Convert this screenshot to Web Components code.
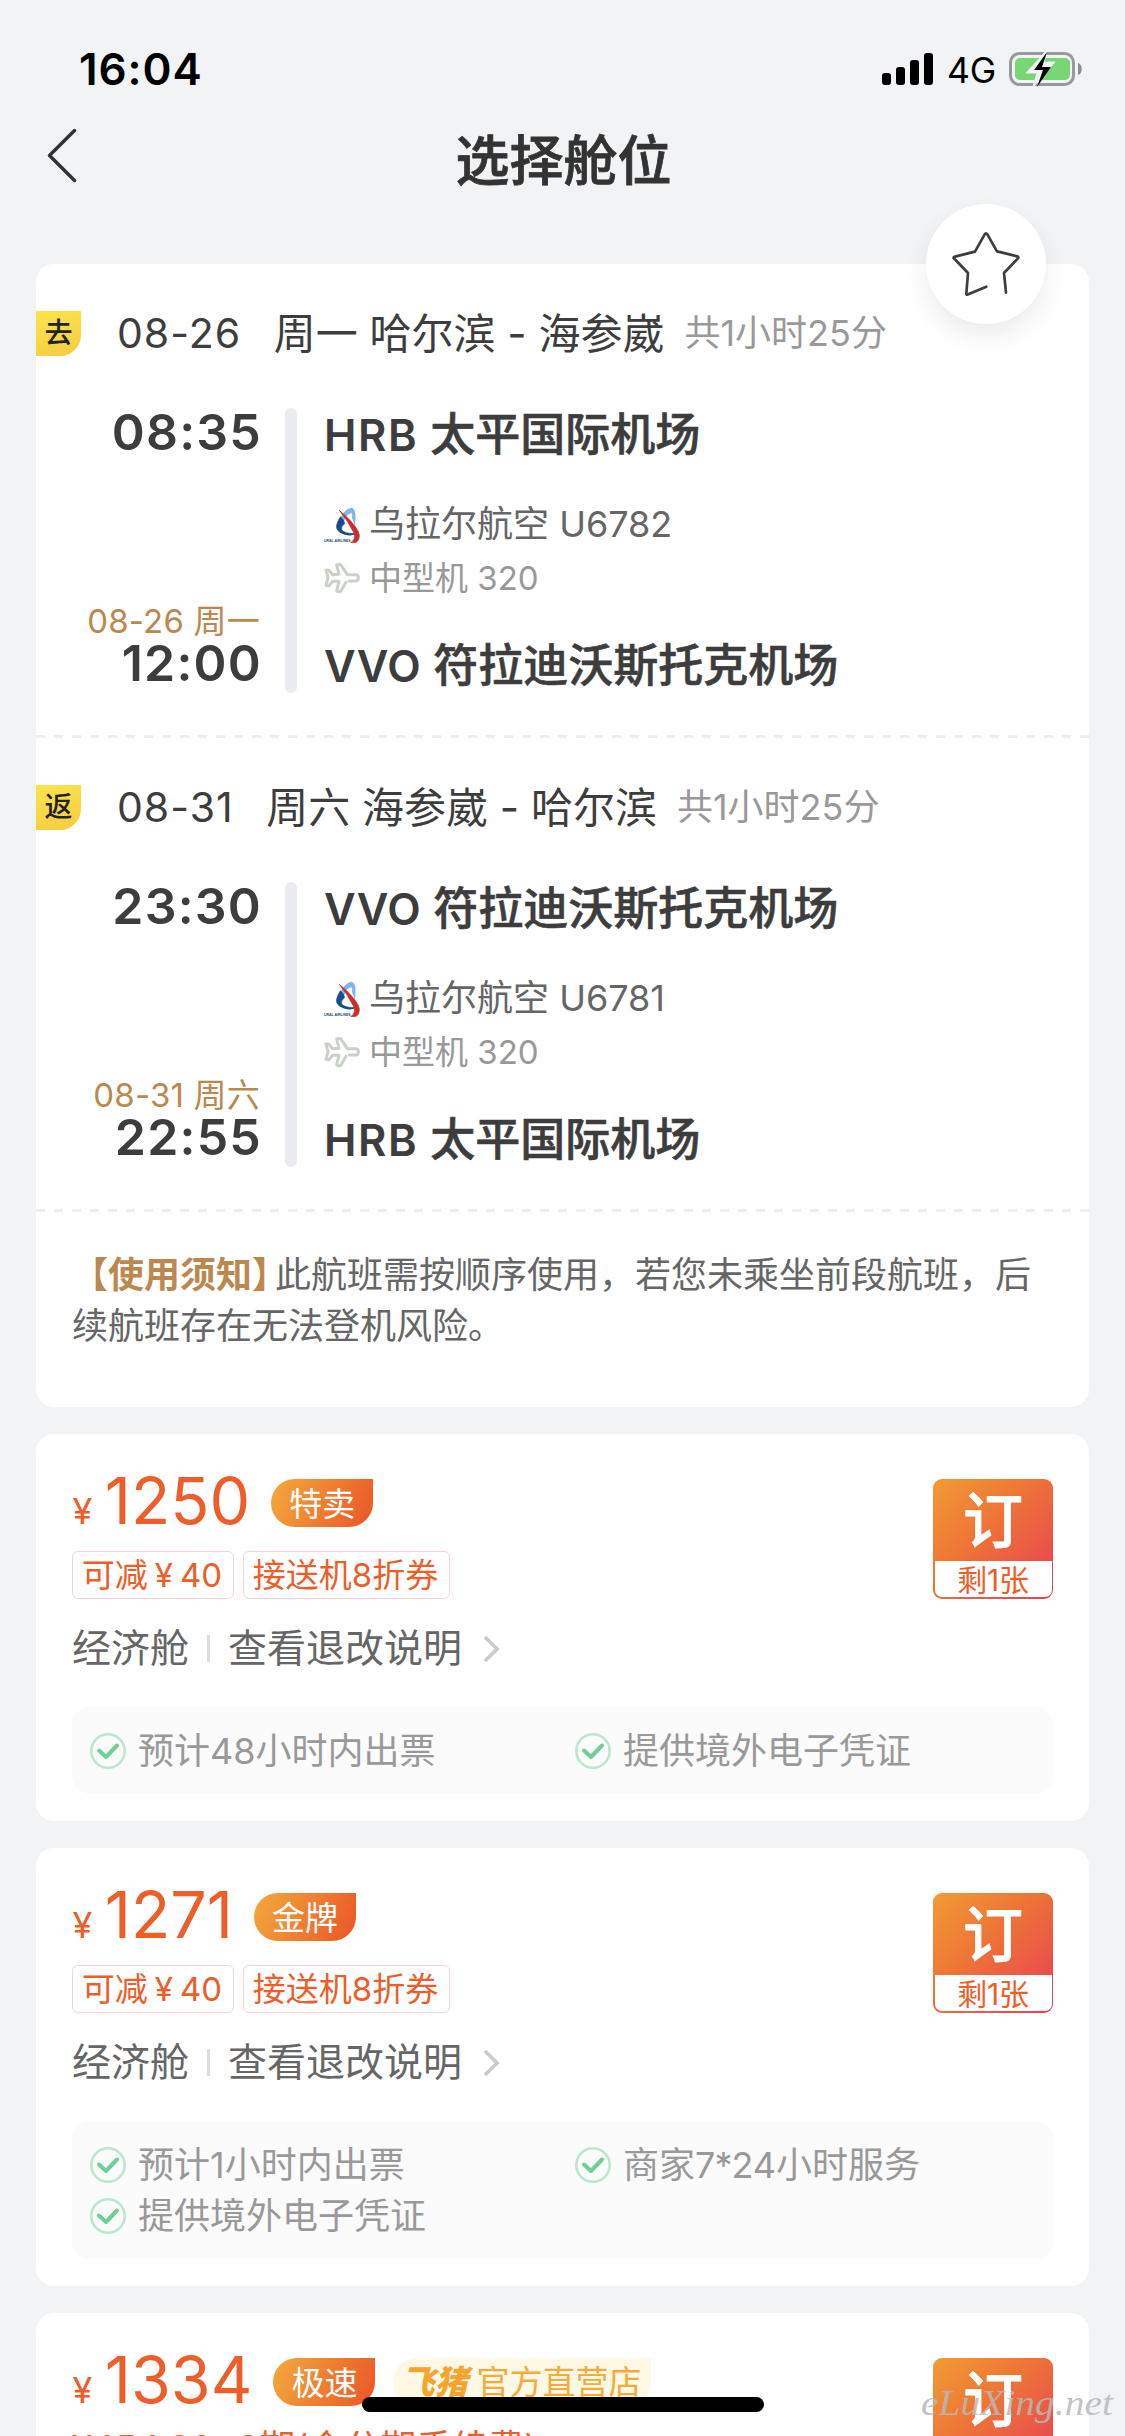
<!DOCTYPE html>
<html lang="zh-CN">
<head>
<meta charset="utf-8">
<title>选择舱位</title>
<style>
  html, body { margin: 0; padding: 0; }
  body {
    width: 1125px; height: 2436px; overflow: hidden;
    background: #f1f3f5; color: #3d3d3d;
    font-family: Inter, "Noto Sans CJK SC", sans-serif;
    -webkit-font-smoothing: antialiased;
  }
</style>
</head>
<body>
<cabin-page></cabin-page>

<script>
const define = (name, render) => customElements.define(name, class extends HTMLElement {
  constructor() { super(); this.attachShadow({ mode: 'open' }); }
  connectedCallback() { this.shadowRoot.innerHTML = render(k => this.getAttribute(k) || '', this); }
});

define('status-bar', () => `
<style>
  :host { display: flex; height: 108px; box-sizing: border-box; padding: 48px 42px 0 79px; align-items: flex-start; color: #000; }
  .time { font-size: 44px; font-weight: 600; line-height: 42px; letter-spacing: .9px; flex: 1; }
  .net { font-size: 35.5px; line-height: 45px; margin: 0 13px 0 13px; letter-spacing: -.2px; }
  svg { display: block; }
</style>
<div class="time">16:04</div>
<svg width="52" height="42" viewBox="0 0 52 42"><rect x="0" y="25" width="9" height="12" rx="3"/><rect x="14" y="19" width="9" height="18" rx="3"/><rect x="28" y="12" width="9" height="25" rx="3"/><rect x="42" y="5" width="9" height="32" rx="3"/></svg>
<div class="net">4G</div>
<svg width="74" height="42" viewBox="0 0 74 42">
  <rect x="1.5" y="5.5" width="63" height="31" rx="9" fill="none" stroke="#999" stroke-width="3"/>
  <path d="M69 15c5 1 5 11 0 12z" fill="#8e8e8e"/>
  <rect x="6" y="10" width="55" height="22" rx="5" fill="#78d675"/>
  <path d="M38 2 17 25h11l-4 14 22-25H35z" fill="#f1f3f5" stroke="#f1f3f5" stroke-width="1"/>
  <path d="M38 4 25 22h9L28 39 42 19h-9z" fill="#000"/>
</svg>`);

define('nav-bar', () => `
<style>
  :host { display: grid; grid-template-columns: 120px 1fr 120px; height: 156px; box-sizing: border-box; align-items: start; }
  svg { margin: 20px 0 0 46px; display: block; }
  h1 { margin: 24px 0 0 2px; font-size: 54px; line-height: 60px; font-weight: 500; text-align: center; color: #333; -webkit-text-stroke: .8px #333; }
</style>
<svg width="32" height="56" viewBox="0 0 32 56"><path d="M28.500 2.500 3.500 27.500 28.500 52.500" fill="none" stroke="#333" stroke-width="3.500" stroke-linecap="round" stroke-linejoin="round"/></svg>
<h1><slot></slot></h1><span></span>`);

define('favorite-button', () => `
<style>
  :host { display: block; width: 120px; height: 120px; border-radius: 50%; background: #fff; box-shadow: 0 12px 24px rgba(0,0,0,.08); }
</style>
<svg width="120" height="120" viewBox="197 521 360 360"><path d="M378 769 320 793Q318 794 318 790L323 728 280 683Q279 680 284 679L344 664 373 612Q377 606 381 612L410 663 471 678Q476 680 473 684L431 728 437 787" fill="none" stroke="#3d3d3d" stroke-width="8" stroke-linecap="round" stroke-linejoin="round"/></svg>`);

define('airline-logo', () => `
<style>:host{display:block;width:36px;height:36px} svg{display:block}</style>
<svg width="36" height="36" viewBox="0 0 108 108">
  <path d="M45 42Q60 6 83 2Q97 6 94 40L93 58Q89 43 84 33Q87 15 77 20Q66 23 58 48Q49 50 45 42Z" fill="#7fb5e8"/>
  <path d="M49 29Q60 38 62 49Q49 61 53 69Q61 80 95 80Q77 89 56 80Q34 71 38 54Q41 42 49 29Z" fill="#164b8e" stroke="#164b8e" stroke-width="2"/>
  <path d="M46 10Q75 34 91 55Q118 88 97 106L80 107Q98 95 88 75Q72 43 46 10Z" fill="#c7302c" stroke="#c7302c" stroke-width="2"/>
  <text x="0" y="104" font-family="Liberation Sans" font-size="13" font-weight="700" fill="#234a7d" textLength="80" lengthAdjust="spacingAndGlyphs">URAL AIRLINES</text>
</svg>`);

define('plane-icon', () => `
<style>:host{display:block;width:36px;height:32px} svg{display:block}</style>
<svg width="36" height="32" viewBox="0 0 108 96"><path d="M76 57H96Q103 56 103 47Q103 38 95 38H70L50 8Q46 6 38 9L45 37 26 38 15 25 6 24 12 47 6 70 15 71 26 58 45 58 38 87Q45 92 51 87L66 61" fill="none" stroke="#c9d2c6" stroke-width="9" stroke-linecap="round" stroke-linejoin="round"/></svg>`);

define('flight-segment', a => {
  const airport = s => { const [code, name] = s.split(' '); return `<div class="ap"><b class="${code}">${code}</b> ${name}</div>`; };
  return `
<style>
  :host { display: block; height: 474px; box-sizing: border-box; padding-top: 47px;
    background: repeating-linear-gradient(90deg, #eee 0 9px, transparent 9px 18px) left bottom / 100% 3px no-repeat; }
  .head { display: flex; height: 45px; align-items: center; font-size: 41px; line-height: 45px; white-space: pre; }
  .tag { width: 45px; height: 45px; border-radius: 0 0 21px 0; background: linear-gradient(160deg, #fae54a, #f6cb42); font-size: 28px; font-weight: 500; text-align: center; color: #222; margin-right: 36px; line-height: 45px; }
  .date { letter-spacing: 1px; margin-right: 32.5px; }
  .cjk { font-size: 42px; letter-spacing: 0; }
  .dur { font-size: 36px; color: #999; margin-left: 20px; line-height: 44px; height: 45px; }
  .body { display: flex; margin-top: 52px; height: 285px; }
  .times { width: 224px; display: flex; flex-direction: column; text-align: right; }
  .t { font-size: 50px; font-weight: 600; line-height: 48px; letter-spacing: 1.200px; margin-right: -2px; }
  .d2 { margin-top: auto; font-size: 33px; line-height: 36px; color: #bb8850; letter-spacing: .2px; }
  .t.end { margin-bottom: 6px; }
  .bar { width: 12px; border-radius: 6px; background: #ebecf1; margin: 0 27px 0 25px; }
  .ap { font-size: 45px; font-weight: 500; line-height: 53px; height: 51px; -webkit-text-stroke: .6px #3d3d3d; }
  .ap b { font-size: 43.5px; font-weight: 600; letter-spacing: .5px; -webkit-text-stroke: 0; }
  .ap .HRB { letter-spacing: 1.600px; }
  .row { display: flex; height: 36px; align-items: center; gap: 9px; }
  .row span { height: 36px; line-height: 35px; }
  .air { margin-top: 48px; font-size: 36px; color: #666; }
  .craft { margin: 17px 0 43px; font-size: 33px; color: #999; }
  .craft span { line-height: 36px; }
</style>
<div class="head"><div class="tag">${a('tag')}</div><span class="date">${a('date')}</span><span class="cjk">${a('week')} ${a('route')}</span><span class="dur">共1小时25分</span></div>
<div class="body">
  <div class="times"><div class="t">${a('dep')}</div><div class="d2">${a('date')} ${a('week')}</div><div class="t end">${a('arr')}</div></div>
  <div class="bar"></div>
  <div>
    ${airport(a('from'))}
    <div class="row air"><airline-logo></airline-logo><span>乌拉尔航空 ${a('no')}</span></div>
    <div class="row craft"><plane-icon></plane-icon><span>中型机 320</span></div>
    ${airport(a('to'))}
  </div>
</div>`; });

define('usage-notice', () => `
<style>
  :host { display: block; padding: 38px 36px 0; height: 157px; font-size: 36px; line-height: 51px; color: #666; }
  p { margin: 0; width: 984px; white-space: nowrap; }
  b { font-weight: 700; color: #bb8850; margin-right: -13px; }
</style>
<p><b>【使用须知】</b>此航班需按顺序使用，若您未乘坐前段航班，后<br>续航班存在无法登机风险。</p>`);

define('white-card', () => `
<style>:host{display:block;background:#fff;border-radius:18px;margin:0 36px 27px;position:relative}</style><slot></slot>`);

define('book-button', () => `
<style>
  :host { display: flex; flex-direction: column; width: 120px; height: 120px; box-sizing: border-box; border-radius: 9px; padding: 0 1.5px 2px; background: linear-gradient(135deg, #f29b35, #ee7636 40%, #e93f55 98%); }
  .go { height: 82px; line-height: 84px; text-align: center; color: #fff; font-size: 60px; font-weight: 500; -webkit-text-stroke: .8px #fff; }
  .left { height: 36px; background: #fff; border-radius: 0 0 7px 7px; text-align: center; color: #ed5e2a; font-size: 30px; line-height: 39px; letter-spacing: -.2px; }
</style><div class="go">订</div><div class="left">剩1张</div>`);

define('label-badge', () => `
<style>:host{display:block;height:48px;line-height:50px;box-sizing:border-box;padding:0 18px;border-radius:24px 0 24px 24px;color:#fff;font-size:33px;background:linear-gradient(115deg,#f2a43a 8%,#ec5b29 92%)}</style><slot></slot>`);

define('store-badge', () => `
<style>:host{display:flex;height:48px;line-height:49px;width:258px;box-sizing:border-box;padding-left:8px;border-radius:24px 0 24px 24px;color:#f3ac3c;font-size:33px;background:#fff8e4}
b{font-weight:900;font-style:italic;color:#f5a42e;margin-right:9px}</style><b>飞猪</b><slot></slot>`);

define('coupon-tag', () => `
<style>:host{display:block;height:48px;line-height:46.5px;box-sizing:border-box;padding:0 9px;border:1.500px solid #fad2d0;border-radius:6px;color:#ed5e2a;font-size:33px;text-indent:-2px;text-align:center}</style><slot></slot>`);

define('service-item', () => `
<style>:host{display:flex;height:51px;align-items:center;gap:12px;color:#999;font-size:36px;line-height:50px;white-space:nowrap;font-feature-settings:"calt" 0} svg{display:block} span{padding-top:1.500px}</style>
<svg width="36" height="36" viewBox="0 0 36 36" fill="none"><circle cx="18" cy="18" r="16.700" stroke="#bbe8cd" stroke-width="2.600"/><path d="M9 17.500 16 24 27 12.500" stroke="#70cf93" stroke-width="4" stroke-linecap="round" stroke-linejoin="round"/></svg><span><slot></slot></span>`);

define('fare-card', (a) => `
<style>
  :host { display: block; padding: 45px 36px 27px; }
  .head { display: flex; justify-content: space-between; height: 120px; }
  .price { display: flex; height: 48px; color: #ed5e2a; }
  .num { font-size: 64.500px; line-height: 45px; letter-spacing: 0; margin-right: 21px; margin-left: .5px; white-space: nowrap; }
  .num i { font-style: normal; font-size: 36px; line-height: 0; margin-right: 12.5px; }
  .tags { display: flex; gap: 9px; margin-top: 24px; }
  .yen { margin: 0 7px; }
  .c1 { width: 162px; } .c2 { width: 207px; }
  .plan { margin-top: 23px; font-size: 36px; line-height: 38px; color: #ed5e2a; white-space: nowrap; }
  .cabin { display: flex; align-items: center; height: 54px; margin-top: 22px; font-size: 39px; color: #666; line-height: 50px; }
  .cabin i { width: 3px; height: 27px; background: #ddd; margin: 0 18px; }
  .cabin svg { margin-left: 19px; margin-top: 2px; }
  .svc { margin-top: 32px; background: #fbfbfb; border-radius: 18px; padding: 18px; display: grid; grid-template-columns: 485px 1fr; }
  .store { margin-left: 18px; }
  .star { margin: 0 -1px; }
</style>
<div class="head"><div>
  <div class="price"><span class="num"><i>¥</i>${a('price')}</span><label-badge>${a('label')}</label-badge>${a('store') ? `<store-badge class="store">${a('store')}</store-badge>` : ''}</div>
  ${a('plan') ? `<div class="plan">${a('plan')}</div>` : `<div class="tags"><coupon-tag class="c1">可减<span class="yen">¥</span>40</coupon-tag><coupon-tag class="c2">接送机8折券</coupon-tag></div>`}
</div><book-button></book-button></div>
<div class="cabin">经济舱<i></i>查看退改说明<svg width="20" height="30" viewBox="0 0 20 30"><path d="M4 3 16 15 4 27" fill="none" stroke="#ccc" stroke-width="3.800"/></svg></div>
<div class="svc">${a('services').split('|').map(s => `<service-item>${s.replace('*', '<span class="star">*</span>')}</service-item>`).join('')}</div>`);

define('home-indicator', () => `<style>:host{display:block;width:402px;height:15px;border-radius:8px;background:#000}</style>`);
define('site-mark', () => `<style>:host{display:block;white-space:nowrap}svg{display:block;overflow:visible}</style><svg width="196" height="50"><text x="1" y="33" font-family="Liberation Serif" font-style="italic" font-size="36" fill="#b8b8b8" fill-opacity=".85" textLength="192" lengthAdjust="spacingAndGlyphs">eLuXing.net</text></svg>`);

define('cabin-page', () => `
<style>
  :host { display: block; width: 1125px; height: 2436px; overflow: hidden; position: relative; }
  .fav { position: absolute; left: 889.5px; top: -60px; z-index: 2; }
  home-indicator { position: absolute; left: 362px; top: 2397px; z-index: 3; }
  site-mark { position: absolute; left: 920px; top: 2382px; z-index: 3; }
</style>
<status-bar></status-bar>
<nav-bar>选择舱位</nav-bar>
<white-card>
  <favorite-button class="fav"></favorite-button>
  <flight-segment tag="去" date="08-26" week="周一" route="哈尔滨 - 海参崴" dep="08:35" arr="12:00" from="HRB 太平国际机场" to="VVO 符拉迪沃斯托克机场" no="U6782"></flight-segment>
  <flight-segment tag="返" date="08-31" week="周六" route="海参崴 - 哈尔滨" dep="23:30" arr="22:55" from="VVO 符拉迪沃斯托克机场" to="HRB 太平国际机场" no="U6781"></flight-segment>
  <usage-notice></usage-notice>
</white-card>
<white-card><fare-card price="1250" label="特卖" services="预计48小时内出票|提供境外电子凭证"></fare-card></white-card>
<white-card><fare-card price="1271" label="金牌" services="预计1小时内出票|商家7*24小时服务|提供境外电子凭证"></fare-card></white-card>
<white-card><fare-card price="1334" label="极速" store="官方直营店" plan="¥454.89×3期(含分期手续费)" services="预计1小时内出票"></fare-card></white-card>
<home-indicator></home-indicator>
<site-mark></site-mark>`);
</script>
</body>
</html>
